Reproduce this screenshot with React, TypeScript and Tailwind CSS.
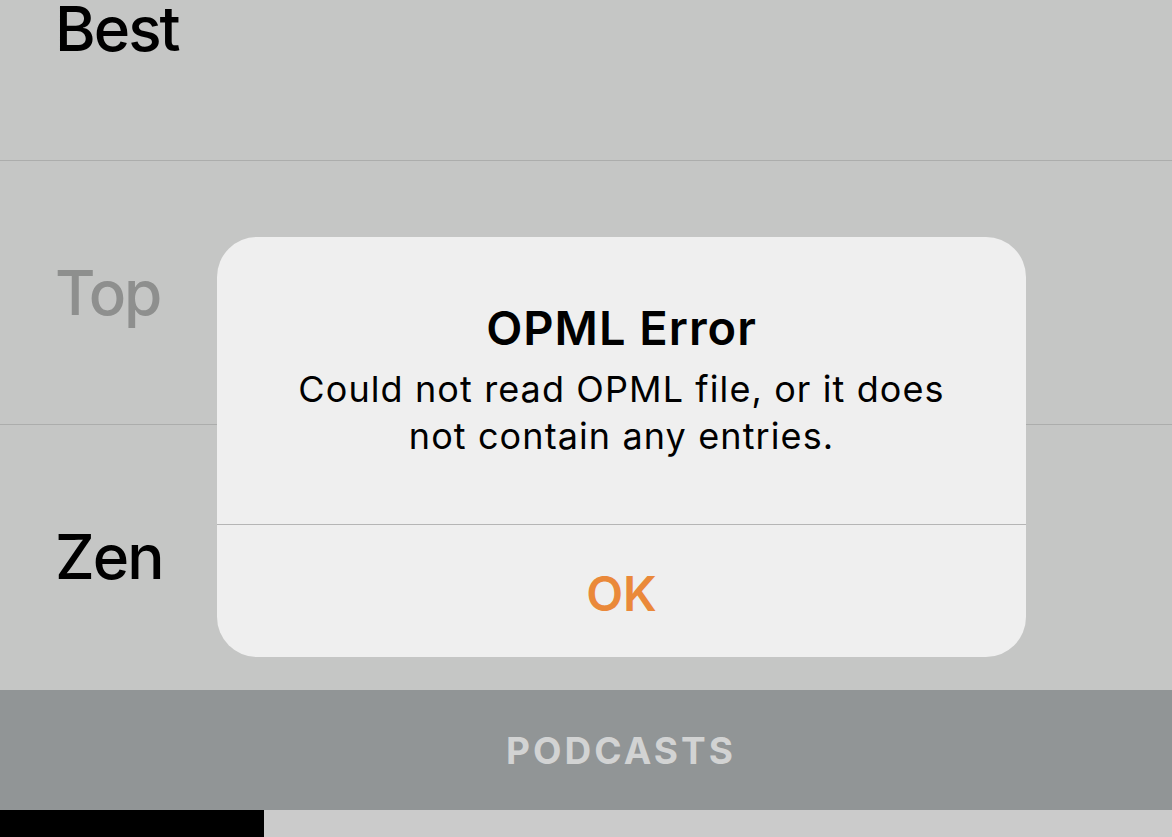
export default function App() {
  const rows = [
    { label: "Best", dim: false },
    { label: "Top", dim: true },
    { label: "Zen", dim: false },
  ];

  return (
    <div className="relative w-[1172px] h-[837px] overflow-hidden bg-[#c5c6c5] font-['Inter','Liberation_Sans',sans-serif]">
      {/* list behind the alert */}
      <div className="flex flex-col h-[690px] overflow-hidden">
        <div className="flex flex-col -mt-[103px]">
          {rows.map((r, i) => (
            <div
              key={r.label}
              className={`flex items-center h-[264px] pl-[55px] shrink-0 ${
                i < rows.length - 1 ? "border-b border-[#acadac]" : ""
              }`}
            >
              <span
                className={`text-[62px] font-medium tracking-[-2px] leading-[70px] ${
                  r.dim ? "text-[#8e8f8e]" : "text-black"
                }`}
              >
                {r.label}
              </span>
            </div>
          ))}
        </div>
      </div>

      {/* tab bar */}
      <div className="flex items-center justify-center h-[120px] bg-[#919596] pl-[70px]">
        <span className="text-[37px] font-bold tracking-[3px] text-[#d2d3d3] mt-[2px]">PODCASTS</span>
      </div>

      {/* progress strip */}
      <div className="flex h-[27px]">
        <div className="w-[264px] bg-black" />
        <div className="flex-1 bg-[#cbcbcb]" />
      </div>

      {/* alert */}
      <div className="absolute left-[217px] top-[237px] w-[809px] h-[420px] rounded-[40px] bg-[#efefef] flex flex-col">
        <div className="flex flex-col items-center h-[288px] border-b border-[#b5b5b5] pt-[63px]">
          <div className="text-[47px] font-semibold text-black leading-[56px] tracking-[1px]">OPML Error</div>
          <div className="text-[36px] text-black text-center leading-[47px] mt-[10px] tracking-[1.1px]">
            Could not read OPML file, or it does
            <br />
            not contain any entries.
          </div>
        </div>
        <div className="flex-1 flex items-center justify-center pt-[6px]">
          <span className="text-[48px] font-semibold text-[#ea893a] leading-none">OK</span>
        </div>
      </div>
    </div>
  );
}
